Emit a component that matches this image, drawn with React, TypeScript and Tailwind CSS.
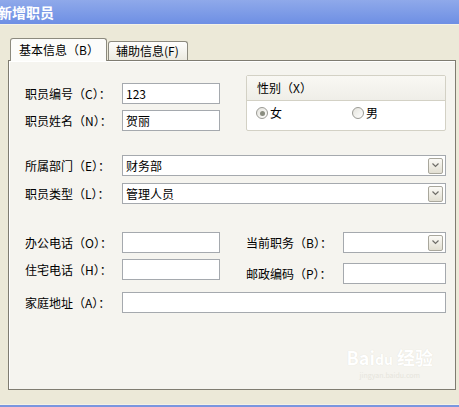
import React from "react";

const FONT = { fontFamily: '"Noto Sans CJK SC", "Liberation Sans", sans-serif' };

const TextBox = ({ value = "", className = "" }: { value?: string; className?: string }) => (
  <div
    className={`h-[21px] border border-[#A5A9AE] bg-white pl-[3px] text-[12px] leading-[19px] text-black ${className}`}
  >
    {value}
  </div>
);

const DropButton = () => (
  <div className="flex h-[16px] w-[15px] items-center justify-center rounded-[2px] border border-[#A9A79C] bg-gradient-to-b from-[#FBFAF6] to-[#E2DFD2]">
    <svg width="7" height="5" viewBox="0 0 7 5">
      <path d="M0.5 0.5 L3.5 3.5 L6.5 0.5" fill="none" stroke="#6E6D68" strokeWidth="1.2" />
    </svg>
  </div>
);

const Select = ({ value = "", className = "" }: { value?: string; className?: string }) => (
  <div
    className={`flex h-[21px] items-center justify-between border border-[#A5A9AE] bg-white pl-[3px] pr-[2px] text-[12px] text-black ${className}`}
  >
    <span>{value}</span>
    <DropButton />
  </div>
);

const Label = ({ text, className = "" }: { text: string; className?: string }) => (
  <div className={`text-[12px] leading-[21px] text-black ${className}`}>{text}</div>
);

const Radio = ({ checked, label }: { checked?: boolean; label: string }) => (
  <div className="flex items-center gap-[2px] text-[12px] text-black">
    <div className="flex h-[12px] w-[12px] items-center justify-center rounded-full border border-[#9A9A94] bg-gradient-to-br from-[#E4E3DC] to-white">
      {checked && <div className="h-[5px] w-[5px] rounded-full bg-[#8A8D80]" />}
    </div>
    <span>{label}</span>
  </div>
);

export default function App() {
  return (
    <div className="flex h-[407px] w-[459px] flex-col overflow-hidden bg-[#ECE9D8]" style={FONT}>
      {/* title bar */}
      <div className="flex h-[24px] items-center bg-gradient-to-b from-[#8FA9EA] to-[#6E8FE4]">
        <span className="-ml-[2px] text-[14px] font-bold text-white">新增职员</span>
      </div>
      <div className="h-[1px] bg-[#F4F2E6]" />

      {/* tabs */}
      <div className="mt-[13px] flex h-[22px] items-end pl-[10px]">
        <div className="relative z-10 -mb-[1px] flex h-[23px] w-[97px] items-center rounded-t-[3px] border border-b-0 border-[#8C8A7E] bg-[#FCFCFA] pl-[8px] text-[12px] text-black">
          基本信息（B）
        </div>
        <div className="ml-[1px] flex h-[19px] w-[80px] items-center rounded-t-[3px] border border-b-0 border-[#8C8A7E] bg-gradient-to-b from-[#FEFEFD] to-[#ECEAE0] pl-[7px] text-[12px] text-black">
          辅助信息(F)
        </div>
      </div>

      {/* panel */}
      <div className="relative ml-[8px] h-[330px] w-[448px] border border-[#7F7C71] bg-[#F5F4EF] shadow-[inset_1px_1px_0_#FFFFFF]">
        <div className="flex pl-[16px] pt-[14px]">
          <div className="mt-[8px] flex flex-col gap-[6px]">
            <div className="flex">
              <Label text="职员编号（C）：" className="w-[97px]" />
              <TextBox value="123" className="w-[98px]" />
            </div>
            <div className="flex">
              <Label text="职员姓名（N）：" className="w-[97px]" />
              <TextBox value="贺丽" className="w-[98px]" />
            </div>
          </div>
          <div className="ml-[26px] flex h-[56px] w-[200px] flex-col rounded-[2px] border border-[#D3D1C5] bg-white">
            <div className="flex h-[25px] items-center border-b border-[#D3D1C5] bg-gradient-to-b from-[#F9F8F4] to-[#EFEEE8] pl-[10px] text-[12px] text-black">
              性别（X）
            </div>
            <div className="flex h-[24px] items-center pl-[9px]">
              <div className="w-[96px]">
                <Radio checked label="女" />
              </div>
              <Radio label="男" />
            </div>
          </div>
        </div>

        <div className="mt-[24px] flex flex-col gap-[7px] pl-[16px]">
          <div className="flex">
            <Label text="所属部门（E）：" className="w-[97px]" />
            <Select value="财务部" className="w-[324px]" />
          </div>
          <div className="flex">
            <Label text="职员类型（L）：" className="w-[97px]" />
            <Select value="管理人员" className="w-[324px]" />
          </div>
        </div>

        <div className="mt-[28px] flex pl-[16px]">
          <div className="flex flex-col gap-[6px]">
            <div className="flex">
              <Label text="办公电话（O）：" className="w-[97px]" />
              <TextBox className="w-[98px]" />
            </div>
            <div className="flex">
              <Label text="住宅电话（H）：" className="w-[97px]" />
              <TextBox className="w-[98px]" />
            </div>
          </div>
          <div className="ml-[26px] flex flex-col gap-[10px]">
            <div className="flex">
              <Label text="当前职务（B）：" className="w-[97px]" />
              <Select className="w-[103px]" />
            </div>
            <div className="flex">
              <Label text="邮政编码（P）：" className="w-[97px]" />
              <TextBox className="w-[103px]" />
            </div>
          </div>
        </div>

        <div className="mt-[8px] flex pl-[16px]">
          <Label text="家庭地址（A）：" className="w-[97px]" />
          <TextBox className="w-[324px]" />
        </div>

        {/* faint watermark */}
        <div className="absolute bottom-[10px] right-[22px] flex flex-col items-center gap-[2px] text-white">
          <div className="text-[18px] font-bold leading-[20px]" style={{ textShadow: "0 0 1px #DEDCD2" }}>
            Bai<span className="text-[14px]">du</span> 经验
          </div>
          <div className="text-[7px] leading-[8px] text-[#E6E4DC]">jingyan.baidu.com</div>
        </div>
      </div>

      <div className="flex-1" />
      <div className="h-[1px] bg-[#F4F2E6]" />
      <div className="h-[2px] bg-[#7A96DF]" />
    </div>
  );
}
